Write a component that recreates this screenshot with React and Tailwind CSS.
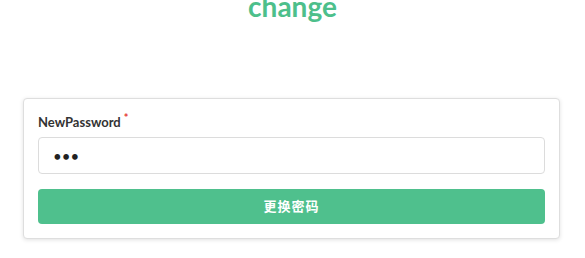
export default function App() {
  return (
    <div className="w-[585px] h-[258px] bg-white overflow-hidden" style={{ fontFamily: "Lato, 'Noto Sans CJK SC', sans-serif" }}>
      <h1 className="text-center text-[28px] font-bold leading-[28px] text-[#4dbf8b] -mt-[8px]">change</h1>
      <div className="mx-[23px] mt-[78px] w-[537px] rounded-[4px] border border-[#dedede] bg-white px-[14px] pt-[14px] pb-[14px] shadow-[0_1px_4px_rgba(0,0,0,0.12)]">
        <label className="flex items-start text-[13px] font-bold text-[#333] leading-[18px]">
          NewPassword<span className="ml-[3px] text-[#e53935] text-[11px] leading-[10px]">*</span>
        </label>
        <input
          type="password"
          defaultValue="abc"
          className="mt-[6px] block w-full h-[37px] rounded-[4px] border border-[#dcdcdc] px-[14px] text-[15px] text-[#222] outline-none"
        />
        <button className="mt-[15px] w-full h-[35px] rounded-[4px] bg-[#4fc08d] text-white text-[13px] font-bold tracking-[1px]">
          更换密码
        </button>
      </div>
    </div>
  );
}
